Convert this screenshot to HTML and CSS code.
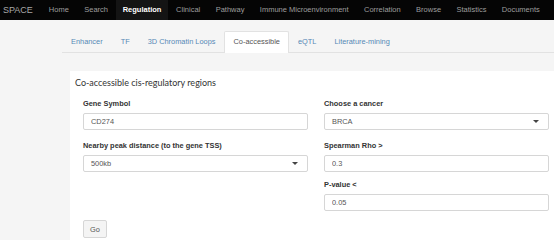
FILE: index.html
```html
<!DOCTYPE html>
<html lang="en">
<head>
    <meta charset="UTF-8">
    <meta name="viewport" content="width=device-width, initial-scale=1.0">
    <title>SPACE - Co-accessible</title>
    <link rel="stylesheet" href="styles.css">
</head>
<body>
    <div class="navbar">
        <div class="brand">SPACE</div>
        <ul class="nav-links">
            <li>Home</li>
            <li>Search</li>
            <li class="active">Regulation</li>
            <li>Clinical</li>
            <li>Pathway</li>
            <li>Immune Microenvironment</li>
            <li>Correlation</li>
            <li>Browse</li>
            <li>Statistics</li>
            <li>Documents</li>
        </ul>
    </div>

    <div class="page">
        <ul class="tabs">
            <li>Enhancer</li>
            <li>TF</li>
            <li>3D Chromatin Loops</li>
            <li class="active">Co-accessible</li>
            <li>eQTL</li>
            <li>Literature-mining</li>
        </ul>

        <div class="panel">
            <div class="panel-title">Co-accessible cis-regulatory regions</div>
            <form class="query-form" onsubmit="return false;">
                <div class="form-grid">
                    <div class="form-col">
                        <div class="form-group">
                            <label>Gene Symbol</label>
                            <input type="text" class="field" value="CD274">
                        </div>
                        <div class="form-group">
                            <label>Nearby peak distance (to the gene TSS)</label>
                            <div class="field select">500kb<span class="caret"></span></div>
                        </div>
                    </div>
                    <div class="form-col">
                        <div class="form-group">
                            <label>Choose a cancer</label>
                            <div class="field select">BRCA<span class="caret"></span></div>
                        </div>
                        <div class="form-group">
                            <label>Spearman Rho &gt;</label>
                            <input type="text" class="field" value="0.3">
                        </div>
                        <div class="form-group tight">
                            <label>P-value &lt;</label>
                            <input type="text" class="field" value="0.05">
                        </div>
                    </div>
                </div>
                <button type="submit" class="go-btn">Go</button>
            </form>
        </div>
    </div>
</body>
</html>
```

FILE: styles.css
```css
/* page */
body {
    margin: 0;
    padding: 0;
    width: 554px;
    height: 240px;
    overflow: hidden;
    background-color: #f5f5f5;
    font-family: "Liberation Sans", Arial, sans-serif;
    color: #333;
}

/* top navbar */
.navbar {
    display: flex;
    align-items: stretch;
    height: 20px;
    background-color: #050505;
}
.brand {
    padding: 0 8.3px 0 3px;
    font-size: 9px;
    line-height: 20px;
    color: #a8a8a8;
    white-space: nowrap;
}
.nav-links {
    display: flex;
    margin: 0;
    padding: 0;
    list-style: none;
}
.nav-links li {
    padding: 0 7.7px;
    font-size: 7.5px;
    line-height: 20px;
    color: #9d9d9d;
    white-space: nowrap;
}
.nav-links li.active {
    padding: 0 7px;
    background-color: #141414;
    color: #fff;
    font-weight: bold;
}

/* tabs */
.page {
    padding-top: 11px;
}
.tabs {
    display: flex;
    margin: 0 0 0 62px;
    padding: 0;
    list-style: none;
    border-bottom: 1px solid #e2e2e2;
}
.tabs li {
    padding: 0 8px;
    font-size: 7.4px;
    line-height: 20px;
    color: #5589b5;
    white-space: nowrap;
    border: 1px solid transparent;
    border-bottom: none;
    border-radius: 2px 2px 0 0;
    margin-bottom: -1px;
}
.tabs li.active {
    background-color: #fff;
    color: #555;
    border-color: #e2e2e2;
    padding-bottom: 1px;
}

/* panel (runs on past the window, as in the page) */
.panel {
    margin: 18px -20px 0 70px;
    padding: 6px 33px 0 13px;
    background-color: #fff;
    height: 163px;
}
.panel-title {
    margin-left: -8px;
    font-family: Lato, "Open Sans", sans-serif;
    font-size: 9px;
    line-height: 12px;
    color: #333;
}
.query-form {
    margin-top: 10px;
}
.form-grid {
    display: grid;
    grid-template-columns: 225px 225px;
    column-gap: 16px;
}
.form-col {
    display: flex;
    flex-direction: column;
}
.form-group {
    display: flex;
    flex-direction: column;
    margin-bottom: 11px;
}
.form-group.tight {
    margin-top: -3px;
}
.form-group:last-child {
    margin-bottom: 9px;
}
.form-group label {
    font-size: 7.4px;
    font-weight: bold;
    line-height: 10px;
    margin-bottom: 4px;
    color: #333;
}
.field {
    box-sizing: border-box;
    height: 17px;
    margin: 0;
    padding: 0 7px;
    border: 1px solid #d6d6d6;
    border-radius: 2px;
    font-family: "Liberation Sans", Arial, sans-serif;
    font-size: 7.4px;
    color: #555;
    background-color: #fff;
    outline: none;
}
.select {
    display: flex;
    align-items: center;
    justify-content: space-between;
    padding-right: 9px;
}
.caret {
    width: 0;
    height: 0;
    border-left: 3px solid transparent;
    border-right: 3px solid transparent;
    border-top: 3px solid #444;
}
.go-btn {
    display: block;
    box-sizing: border-box;
    width: 24px;
    height: 18px;
    padding: 0;
    border: 1px solid #d6d6d6;
    border-radius: 2px;
    background-color: #f4f4f4;
    font-family: "Liberation Sans", Arial, sans-serif;
    font-size: 7.4px;
    color: #555;
}
```
